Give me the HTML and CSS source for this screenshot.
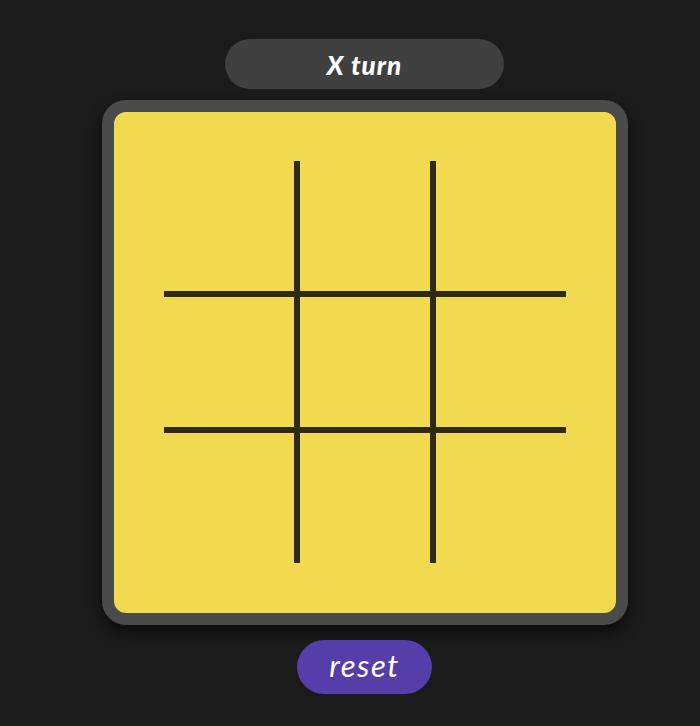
FILE: index.html
```html
<!DOCTYPE html>
<html>
<head>
<meta charset="utf-8">
<link rel="stylesheet" href="styles.css">
</head>
<body>
<div class="app">
  <div class="status">X turn</div>
  <div class="board">
    <div class="grid">
      <div class="cell"></div><div class="cell"></div><div class="cell"></div>
      <div class="cell"></div><div class="cell"></div><div class="cell"></div>
      <div class="cell"></div><div class="cell"></div><div class="cell"></div>
    </div>
  </div>
  <button class="reset">reset</button>
</div>
</body>
</html>
```
FILE: styles.css
```css
html, body {
  margin: 0;
  padding: 0;
  background: #1b1b1b;
  overflow: hidden;
}
.app {
  display: flex;
  flex-direction: column;
  align-items: center;
  padding: 39px 0 0 29px;
  font-family: "Lato", "DejaVu Sans", sans-serif;
}
.status {
  width: 279px;
  height: 50px;
  border-radius: 25px;
  background: #404040;
  color: #ffffff;
  font-weight: 900;
  font-style: italic;
  font-size: 26px;
  letter-spacing: 1px;
  display: flex;
  align-items: center;
  justify-content: center;
  box-sizing: border-box;
  padding-top: 1px;
}
.board {
  margin-top: 11px;
  background: #f1da4f;
  border: 12px solid #4b4b4b;
  border-radius: 24px;
  padding: 49px 50px 50px 50px;
  box-shadow: 0 8px 14px rgba(0,0,0,0.55);
}
.grid {
  display: grid;
  grid-template-columns: 130px 130px 130px;
  grid-template-rows: 130px 130px 130px;
  gap: 6px;
  background: #2f2a12;
}
.cell {
  background: #f1da4f;
}
.reset {
  margin-top: 15px;
  width: 135px;
  height: 54px;
  border: none;
  border-radius: 27px;
  background: #553ea9;
  color: #ffffff;
  font-family: "Lato", "DejaVu Sans", sans-serif;
  font-style: italic;
  font-size: 31px;
  letter-spacing: 1.5px;
  padding: 0 0 4px 0;
  cursor: pointer;
}
```
